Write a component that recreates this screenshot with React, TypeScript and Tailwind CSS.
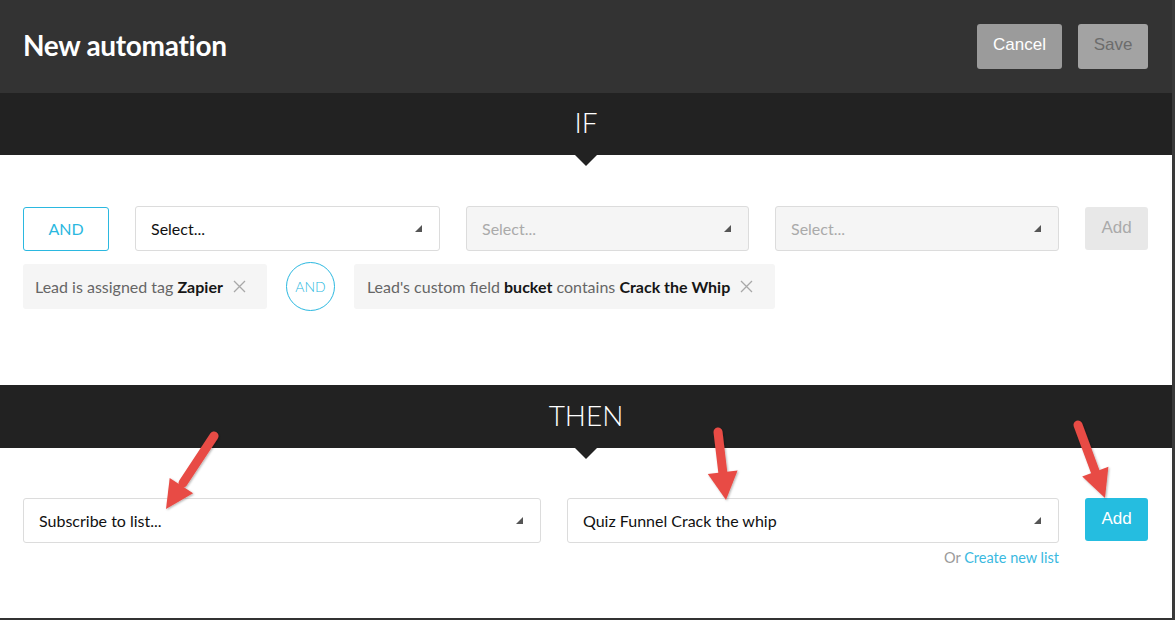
import React from "react";

const lato = { fontFamily: "Lato, 'Open Sans', sans-serif" };
const arial = { fontFamily: "'Liberation Sans', Arial, sans-serif" };

function Caret() {
  return (
    <svg width="7" height="7" viewBox="0 0 7 7" className="shrink-0">
      <polygon points="7,0 7,7 0,7" fill="#555" />
    </svg>
  );
}

function Select({
  label,
  width,
  disabled,
}: {
  label: string;
  width: string;
  disabled?: boolean;
}) {
  return (
    <div
      className={`${width} h-[45px] flex items-center justify-between pl-[15px] pr-[17px] rounded-[3px] border border-[#dcdcdc] text-[16px] ${
        disabled ? "bg-[#f5f5f5] text-[#aaaaaa]" : "bg-white text-[#111]"
      }`}
    >
      <span>{label}</span>
      <Caret />
    </div>
  );
}

function Close() {
  return (
    <svg width="13" height="13" viewBox="0 0 13 13" className="ml-[10px] shrink-0">
      <path d="M1 1 L12 12 M12 1 L1 12" stroke="#a8a8a8" strokeWidth="1.3" />
    </svg>
  );
}

function Band({ title, height }: { title: string; height: string }) {
  return (
    <div className={`relative ${height} bg-[#222222] flex items-center justify-center shrink-0`}>
      <span className="text-white text-[28px] font-light pb-[4px]">{title}</span>
      <svg
        width="22"
        height="11"
        viewBox="0 0 22 11"
        className="absolute left-1/2 -translate-x-1/2 top-full"
      >
        <polygon points="0,0 22,0 11,11" fill="#222222" />
      </svg>
    </div>
  );
}

function Arrow({ d, head }: { d: string; head: string }) {
  return (
    <g>
      <path d={d} stroke="#e84c45" strokeWidth="9" strokeLinecap="round" fill="none" />
      <polygon points={head} fill="#e84c45" />
    </g>
  );
}

export default function App() {
  return (
    <div
      className="relative w-[1175px] h-[620px] overflow-hidden bg-white flex flex-col border-r-[3px] border-[#3a3a3a]"
      style={lato}
    >
      {/* header */}
      <div className="h-[93px] bg-[#333333] flex items-center justify-between pl-[23px] pr-[24px] shrink-0">
        <h1 className="text-white text-[28px] font-bold tracking-[-0.3px] pb-[4px]">New automation</h1>
        <div className="flex items-center gap-4 text-[17px]" style={arial}>
          <button className="h-[45px] w-[85px] rounded-[3px] bg-[#9b9b9b] text-white pb-[3px]">Cancel</button>
          <button className="h-[45px] w-[70px] rounded-[3px] bg-[#a3a3a3] text-[#6c6c6c] pb-[3px]">Save</button>
        </div>
      </div>

      {/* IF */}
      <Band title="IF" height="h-[62px]" />
      <div className="h-[230px] shrink-0 pt-[51px] pl-[23px]">
        <div className="flex items-center gap-[26px]">
          <div className="w-[86px] h-[44px] rounded-[3px] border border-[#2bb8e0] text-[#2bb8e0] text-[16px] flex items-center justify-center">
            AND
          </div>
          <Select label="Select..." width="w-[305px]" />
          <Select label="Select..." width="w-[283px]" disabled />
          <Select label="Select..." width="w-[284px]" disabled />
          <button
            className="w-[63px] h-[43px] rounded-[3px] bg-[#e8e8e8] text-[#aaaaaa] text-[17px] pb-[2px]"
            style={arial}
          >
            Add
          </button>
        </div>
        <div className="flex items-center gap-[19px] mt-[11px]">
          <div className="h-[45px] flex items-center bg-[#f5f5f5] rounded-[3px] pl-[12px] pr-[21px] text-[16px] text-[#666]">
            <span>
              Lead is assigned tag <b className="text-[#161616]">Zapier</b>
            </span>
            <Close />
          </div>
          <div className="w-[49px] h-[49px] rounded-full border border-[#2bb8e0] text-[#2bb8e0] text-[14px] font-light flex items-center justify-center">
            AND
          </div>
          <div className="h-[45px] flex items-center bg-[#f5f5f5] rounded-[3px] pl-[13px] pr-[22px] text-[16px] text-[#666]">
            <span>
              Lead's custom field <b className="text-[#161616]">bucket</b> contains{" "}
              <b className="text-[#161616]">Crack the Whip</b>
            </span>
            <Close />
          </div>
        </div>
      </div>

      {/* THEN */}
      <Band title="THEN" height="h-[63px]" />
      <div className="flex-1 pt-[50px] pl-[23px]">
        <div className="flex items-start gap-[26px]">
          <Select label="Subscribe to list..." width="w-[518px]" />
          <div className="flex flex-col items-end">
            <Select label="Quiz Funnel Crack the whip" width="w-[492px]" />
            <div className="mt-[4px] text-[14.5px] text-[#9a9a9a]">
              Or <span className="text-[#3bb9df]">Create new list</span>
            </div>
          </div>
          <button
            className="w-[63px] h-[43px] rounded-[3px] bg-[#25bde0] text-white text-[17px] pb-[2px]"
            style={arial}
          >
            Add
          </button>
        </div>
      </div>
      <div className="h-[2px] bg-[#333333] shrink-0" />

      {/* annotation arrows */}
      <svg className="absolute inset-0 pointer-events-none" width="1175" height="620">
        <defs>
          <filter id="sh" x="-20%" y="-20%" width="140%" height="140%">
            <feDropShadow dx="1" dy="1" stdDeviation="1" floodOpacity="0.3" />
          </filter>
        </defs>
        <g filter="url(#sh)">
          <Arrow d="M214 436 L183 483" head="166,509 193.1,493.3 169.7,477.9" />
          <Arrow d="M718 432 L723 474" head="726,500 737.6,470.4 707.8,474" />
          <Arrow d="M1078 425 L1095 471" head="1105,498 1108.4,466.8 1082.2,476.6" />
        </g>
      </svg>
    </div>
  );
}
